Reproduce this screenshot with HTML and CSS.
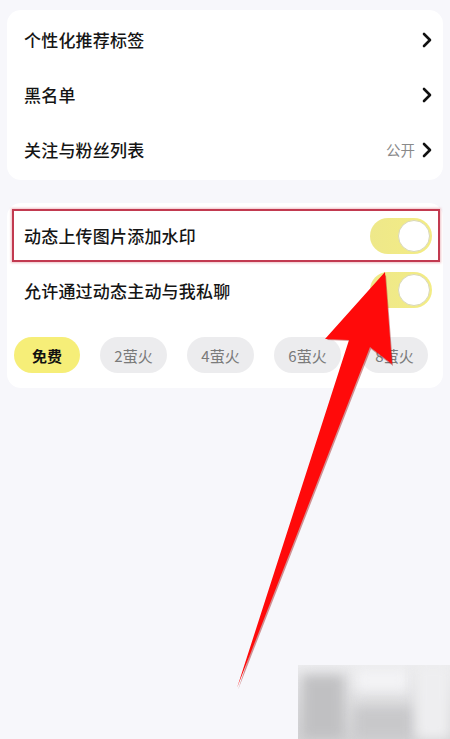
FILE: index.html
```html
<!DOCTYPE html>
<html lang="zh-CN">
<head>
<meta charset="utf-8">
<link rel="stylesheet" href="styles.css">
</head>
<body>
<div class="page">
  <div class="card card-list">
    <div class="row">
      <span class="label">个性化推荐标签</span>
      <span class="right"><svg class="chev" viewBox="0 0 10 16"><path d="M2 2 L8 8 L2 14" /></svg></span>
    </div>
    <div class="row">
      <span class="label">黑名单</span>
      <span class="right"><svg class="chev" viewBox="0 0 10 16"><path d="M2 2 L8 8 L2 14" /></svg></span>
    </div>
    <div class="row">
      <span class="label">关注与粉丝列表</span>
      <span class="right"><span class="value">公开</span><svg class="chev" viewBox="0 0 10 16"><path d="M2 2 L8 8 L2 14" /></svg></span>
    </div>
  </div>

  <div class="card card-settings">
    <div class="row row-hl">
      <span class="label">动态上传图片添加水印</span>
      <span class="toggle"><span class="knob"></span></span>
    </div>
    <div class="row row-plain">
      <span class="label">允许通过动态主动与我私聊</span>
      <span class="toggle"><span class="knob"></span></span>
    </div>
    <div class="chips">
      <span class="chip chip-on">免费</span>
      <span class="chip">2萤火</span>
      <span class="chip">4萤火</span>
      <span class="chip">6萤火</span>
      <span class="chip">8萤火</span>
    </div>
  </div>

  <svg class="arrow" viewBox="0 0 450 739" width="450" height="739">
    <polygon class="arrow-shadow" points="386,275 327,340 351,341 238,690 371,349 393,366" />
    <polygon class="arrow-fill" points="385,272 325,339 349,340 237,688 370,347 392,364" />
  </svg>

  <div class="watermark">
    <span class="wm wm1"></span>
    <span class="wm wm2"></span>
    <span class="wm wm3"></span>
    <span class="wm wm4"></span>
  </div>
</div>
</body>
</html>
```

FILE: styles.css
```css
html, body {
  margin: 0;
  padding: 0;
}
body {
  background: #f7f7fb;
  font-family: "Noto Sans CJK SC", "Noto Sans", sans-serif;
  width: 450px;
  height: 739px;
  overflow: hidden;
}
.page {
  position: relative;
  width: 450px;
  height: 739px;
  padding-top: 10px;
  box-sizing: border-box;
}
.card {
  background: #ffffff;
  margin: 0 7px;
  border-radius: 14px;
}
.card-list {
  padding: 2px 11px 3px 17px;
}
.row {
  display: flex;
  align-items: center;
  justify-content: space-between;
  height: 55px;
}
.label {
  font-size: 17px;
  color: #151515;
  font-weight: 500;
  letter-spacing: 0.2px;
}
.right {
  display: flex;
  align-items: center;
  gap: 7px;
}
.value {
  font-size: 14.5px;
  color: #8a8a8a;
}
.chev {
  width: 10px;
  height: 16px;
  fill: none;
  stroke: #111;
  stroke-width: 2.6;
  stroke-linecap: round;
  stroke-linejoin: round;
}
.card-settings {
  margin-top: 23px;
  padding: 6px 0 15px;
}
.row-hl {
  margin: 0 3px 0 5px;
  height: 53px;
  border: 2px solid #c23a50;
  box-shadow: 0 0 2px 1px rgba(220, 120, 130, 0.45);
  box-sizing: border-box;
  padding: 0 6px 0 10px;
}
.row-plain {
  height: 56px;
  padding: 0 11px 0 17px;
}
.toggle {
  position: relative;
  width: 62px;
  height: 36px;
  border-radius: 18px;
  background: linear-gradient(90deg, #eee88a 0%, #f3ec84 100%);
  display: flex;
  align-items: center;
  justify-content: flex-end;
  padding: 0 2px;
  box-sizing: border-box;
}
.knob {
  width: 32px;
  height: 32px;
  border-radius: 50%;
  background: #ffffff;
  border: 1.5px solid #d9d8b8;
  box-sizing: border-box;
}
.chips {
  display: flex;
  gap: 20px;
  padding-left: 7px;
  margin-top: 19px;
}
.chip {
  width: 67px;
  height: 36px;
  border-radius: 18px;
  background: #ececee;
  color: #7a7a7a;
  font-size: 15px;
  display: flex;
  align-items: center;
  justify-content: center;
}
.chip-on {
  width: 66px;
  background: #f6ee78;
  color: #111;
  font-weight: 700;
}
.arrow {
  position: absolute;
  left: 0;
  top: 0;
  pointer-events: none;
}
.arrow-fill {
  fill: #ff0a0a;
}
.arrow-shadow {
  fill: #a01010;
  opacity: 0.45;
}
.watermark {
  position: absolute;
  left: 298px;
  top: 665px;
  width: 152px;
  height: 74px;
  background: linear-gradient(180deg, #ececee 0%, #dcdcde 60%, #d4d4d6 100%);
  overflow: hidden;
}
.wm {
  position: absolute;
  filter: blur(6px);
}
.wm1 {
  left: 4px;
  top: 10px;
  width: 42px;
  height: 64px;
  background: #c0c0c2;
}
.wm2 {
  left: 58px;
  top: 4px;
  width: 52px;
  height: 22px;
  background: #f3f3f5;
}
.wm3 {
  left: 56px;
  top: 42px;
  width: 60px;
  height: 32px;
  background: #c8c8ca;
}
.wm4 {
  left: 118px;
  top: 0;
  width: 34px;
  height: 74px;
  background: #eeeef0;
}
```
